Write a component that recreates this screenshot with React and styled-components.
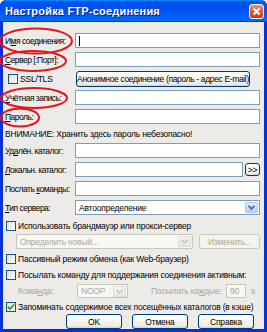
import styled, { createGlobalStyle } from 'styled-components'

const GlobalStyle = createGlobalStyle`
  html, body { margin: 0; padding: 0; }
  body {
    width: 267px;
    height: 332px;
    overflow: hidden;
    background: #fff;
    font-family: "Liberation Sans", Arial, sans-serif;
  }
`

const Window = styled.div`
  position: relative;
  width: 267px;
  height: 332px;
  box-sizing: border-box;
  display: flex;
  flex-direction: column;
  background: #0831d9;
  border-radius: 6px 6px 0 0;
  overflow: hidden;
`

const TitleBar = styled.div`
  height: 22px;
  flex: none;
  display: flex;
  align-items: center;
  justify-content: space-between;
  padding: 0 3px 0 5px;
  background: linear-gradient(180deg, #0997ff, #0053ee 8%, #0050ee 40%, #06f 88%, #06f 93%, #005bff 95%, #003dd7 96%, #003dd7);
`

const Title = styled.span`
  color: #fff;
  font-weight: bold;
  font-size: 11px;
  letter-spacing: 0.2px;
  text-shadow: 1px 1px 0 #0a1883;
`

const CloseButton = styled.div`
  width: 13px;
  height: 13px;
  border: 1px solid #fff;
  border-radius: 3px;
  background: linear-gradient(180deg, #ef9274, #d9532f 60%, #c43a17);
  display: flex;
  align-items: center;
  justify-content: center;
`

const Body = styled.div`
  flex: 1;
  margin: 0 3px 3px 3px;
  padding: 11px 4px 0 2px;
  background: #ecebe8;
  display: flex;
  flex-direction: column;
  font-size: 8.5px;
  letter-spacing: -0.2px;
  color: #000;
`

const FieldRow = styled.div`
  display: grid;
  grid-template-columns: 70px 1fr;
  align-items: center;
  height: ${p => p.$h || 15}px;
  margin-top: ${p => p.$mt ?? 4}px;
`

const FieldLabel = styled.span`
  white-space: nowrap;
  letter-spacing: -0.5px;
`

const Label = styled.span`
  white-space: nowrap;
  flex: none;
  width: ${p => (p.$w ? `${p.$w}px` : 'auto')};
  color: ${p => (p.$disabled ? '#aca899' : '#000')};
`

const Key = styled.span`
  text-decoration: underline;
`

const TextBox = styled.div`
  box-sizing: border-box;
  height: ${p => p.$h || 15}px;
  width: ${p => (p.$w ? `${p.$w}px` : 'auto')};
  flex: ${p => (p.$w ? 'none' : 1)};
  background: ${p => (p.$disabled ? '#f7f7f4' : '#fff')};
  border: 1px solid ${p => (p.$disabled ? '#c9c7ba' : '#7f9db9')};
  color: ${p => (p.$disabled ? '#aca899' : '#000')};
  display: flex;
  align-items: center;
  padding-left: 3px;
`

const Caret = styled.span`
  width: 1px;
  height: 10px;
  background: #000;
`

const Combo = styled(TextBox)`
  padding-right: 1px;
  justify-content: space-between;
`

const ComboArrow = styled.div`
  width: 13px;
  height: 11px;
  border-radius: 1px;
  background: ${p => (p.$disabled
    ? 'linear-gradient(180deg, #f3f3f0, #e6e6e0)'
    : 'linear-gradient(180deg, #e1eafe, #b9cdf8)')};
  border: 1px solid ${p => (p.$disabled ? '#dcdcd3' : '#b1c6f1')};
  box-sizing: border-box;
  display: flex;
  align-items: center;
  justify-content: center;
`

const InlineGroup = styled.div`
  display: flex;
  align-items: center;
  gap: ${p => p.$gap ?? 2}px;
`

const Button = styled.div`
  box-sizing: border-box;
  height: ${p => p.$h || 15}px;
  width: ${p => p.$w}px;
  flex: none;
  margin-left: ${p => p.$ml || 0}px;
  border: 1px solid ${p => (p.$disabled ? '#c9c7ba' : '#003c74')};
  border-radius: 3px;
  background: ${p => (p.$disabled
    ? '#f5f4ea'
    : 'linear-gradient(180deg, #fff, #f4f3ee 50%, #ecebe6 86%, #d6d0c5)')};
  color: ${p => (p.$disabled ? '#aca899' : '#000')};
  letter-spacing: ${p => (p.$tight ? '-0.35px' : 'inherit')};
  display: flex;
  align-items: center;
  justify-content: center;
  white-space: nowrap;
`

const Warning = styled.div`
  height: 11px;
  margin-top: 4px;
  display: flex;
  align-items: center;
  white-space: nowrap;
`

const CheckRow = styled.label`
  display: flex;
  align-items: center;
  gap: 2px;
  height: 11px;
  margin-top: ${p => p.$mt ?? 4}px;
  margin-left: 1px;
  white-space: nowrap;
`

const Box = styled.span`
  box-sizing: border-box;
  width: 10px;
  height: 10px;
  flex: none;
  border: 1px solid #1c5180;
  background: linear-gradient(135deg, #dcdcd7, #fff);
  display: flex;
  align-items: center;
  justify-content: center;
`

const SubRow = styled.div`
  display: flex;
  align-items: center;
  height: ${p => p.$h || 15}px;
  margin-top: ${p => p.$mt ?? 4}px;
  padding-left: ${p => p.$pl || 0}px;
`

const Spacer = styled.span`
  display: inline-block;
  width: ${p => p.$w}px;
  flex: none;
`

const Footer = styled.div`
  display: flex;
  justify-content: flex-end;
  gap: 10px;
  margin-top: 2px;
  padding-right: 6px;
`

const Marks = styled.svg`
  position: absolute;
  left: 0;
  top: 0;
  pointer-events: none;
`

function Arrow({ disabled }) {
  return (
    <svg width="7" height="5" viewBox="0 0 7 5">
      <path d="M0.5 0.8 L3.5 3.8 L6.5 0.8" fill="none" stroke={disabled ? '#c9c7ba' : '#4d6185'} strokeWidth="1.6" />
    </svg>
  )
}

function Check({ checked }) {
  return (
    <Box>
      {checked && (
        <svg width="8" height="8" viewBox="0 0 8 8">
          <path d="M1 3.8 L3 6 L7 1.5" fill="none" stroke="#21a121" strokeWidth="1.8" />
        </svg>
      )}
    </Box>
  )
}

export default function App() {
  return (
    <Window>
      <GlobalStyle />
      <TitleBar>
        <Title>Настройка FTP-соединения</Title>
        <CloseButton>
          <svg width="9" height="9" viewBox="0 0 9 9">
            <path d="M1.5 1.5 L7.5 7.5 M7.5 1.5 L1.5 7.5" stroke="#fff" strokeWidth="1.8" />
          </svg>
        </CloseButton>
      </TitleBar>

      <Body>
        <FieldRow $mt={0}>
          <FieldLabel>И<Key>м</Key>я соединения:</FieldLabel>
          <TextBox><Caret /></TextBox>
        </FieldRow>
        <FieldRow>
          <FieldLabel><Key>С</Key>ервер [:Порт]:</FieldLabel>
          <TextBox />
        </FieldRow>
        <FieldRow>
          <InlineGroup $gap={2}>
            <Spacer $w={1} />
            <Check />
            <span>SSL/TLS</span>
          </InlineGroup>
          <Button $w={174} $h={16} $ml={1} $tight>Анонимное соединение (пароль - адрес E-mail)</Button>
        </FieldRow>
        <FieldRow>
          <FieldLabel><Key>У</Key>чётная запись:</FieldLabel>
          <TextBox />
        </FieldRow>
        <FieldRow>
          <FieldLabel><Key>П</Key>ароль:</FieldLabel>
          <TextBox />
        </FieldRow>
        <Warning>ВНИМАНИЕ: Хранить здесь пароль небезопасно!</Warning>
        <FieldRow>
          <FieldLabel>Уд<Key>а</Key>лён. каталог:</FieldLabel>
          <TextBox />
        </FieldRow>
        <FieldRow>
          <FieldLabel><Key>Л</Key>окальн. каталог:</FieldLabel>
          <InlineGroup $gap={2}>
            <TextBox />
            <Button $w={15} $h={13}>&gt;&gt;</Button>
          </InlineGroup>
        </FieldRow>
        <FieldRow>
          <FieldLabel>Послать <Key>к</Key>оманды:</FieldLabel>
          <TextBox />
        </FieldRow>
        <FieldRow>
          <FieldLabel><Key>Т</Key>ип сервера:</FieldLabel>
          <Combo>
            <span>Автоопределение</span>
            <ComboArrow><Arrow /></ComboArrow>
          </Combo>
        </FieldRow>

        <CheckRow $mt={5}>
          <Check />
          <span>Использовать брандмауэр или прокси-сервер</span>
        </CheckRow>
        <SubRow $mt={3} $pl={11}>
          <Combo $w={177} $disabled>
            <span>Определить новый...</span>
            <ComboArrow $disabled><Arrow disabled /></ComboArrow>
          </Combo>
          <Spacer $w={6} />
          <Button $w={61} $disabled>Изменить...</Button>
        </SubRow>
        <CheckRow>
          <Check />
          <span>Пассивный режим обмена (как Web-браузер)</span>
        </CheckRow>
        <CheckRow $mt={5}>
          <Check />
          <span>Посылать команду для поддержания соединения активным:</span>
        </CheckRow>
        <SubRow $mt={4} $pl={13} $h={14}>
          <Label $disabled $w={59}>Кома<Key>н</Key>да:</Label>
          <Combo $w={51} $h={14} $disabled>
            <span>NOOP</span>
            <ComboArrow $disabled><Arrow disabled /></ComboArrow>
          </Combo>
          <Spacer $w={23} />
          <Label $disabled $w={75}>Посылать ка<Key>ж</Key>дые:</Label>
          <TextBox $w={20} $h={14} $disabled>90</TextBox>
          <Spacer $w={5} />
          <Label $disabled>s</Label>
        </SubRow>
        <CheckRow $mt={3}>
          <Check checked />
          <span>Запоминать содержимое всех посещённых каталогов (в кэше)</span>
        </CheckRow>
        <Footer>
          <Button $w={56}>OK</Button>
          <Button $w={56}>Отмена</Button>
          <Button $w={56}>Справка</Button>
        </Footer>
      </Body>

      <Marks width="267" height="332" viewBox="0 0 267 332">
        <g fill="none" stroke="#e3141c" strokeWidth="2">
          <ellipse cx="36" cy="41" rx="36" ry="12.5" />
          <ellipse cx="33" cy="61" rx="33" ry="10" />
          <ellipse cx="34" cy="98" rx="33" ry="10" />
          <ellipse cx="20" cy="117.5" rx="19" ry="9" />
        </g>
      </Marks>
    </Window>
  )
}
